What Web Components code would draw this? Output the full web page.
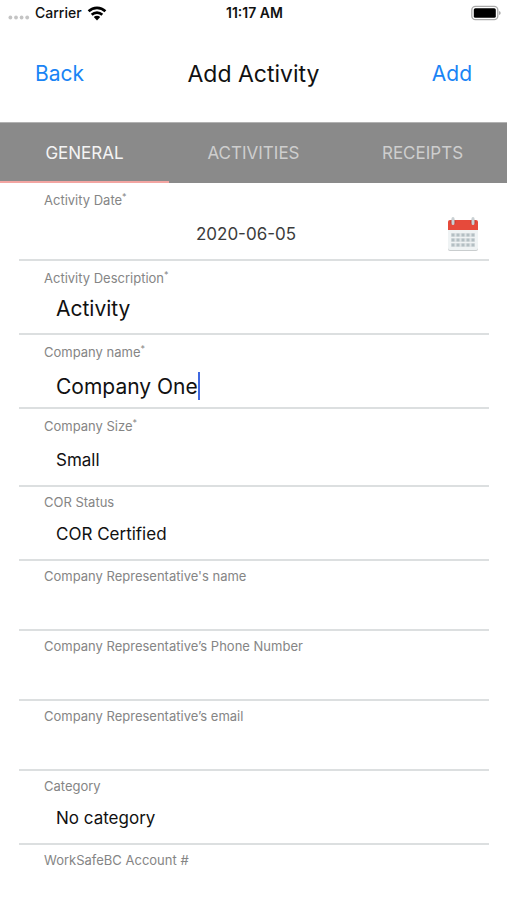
<!DOCTYPE html>
<html lang="en">
<head>
<meta charset="utf-8">
<meta name="viewport" content="width=device-width, initial-scale=1">
<title>Add Activity</title>
<style>
  html { background: #fff; }
  body { margin: 0; min-height: 100vh; overflow: hidden; font-family: Inter, "Liberation Sans", sans-serif; color: #111; }
</style>
</head>
<body>
<activity-screen></activity-screen>

<script>
const define = (name, html, setup) => {
  const template = document.createElement('template');
  template.innerHTML = html;
  customElements.define(name, class extends HTMLElement {
    constructor() {
      super();
      this.attachShadow({ mode: 'open' }).append(template.content.cloneNode(true));
    }
    connectedCallback() { if (setup) setup(this, this.shadowRoot); }
  });
};

define('status-bar', `
  <style>
    :host { display: grid; grid-template-columns: 1fr auto 1fr; align-items: center; height: 26px; padding: 0 6px 0 8px; font-size: 14px; line-height: 18px; font-weight: 500; color: #111; }
    .left { display: flex; align-items: center; gap: 5px; }
    .signal { padding-top: 8px; }
    time { font-weight: 600; }
    .battery { justify-self: end; }
    svg { display: block; }
  </style>
  <div class="left">
    <svg class="signal" width="22" height="5" viewBox="0 0 22 5" fill="#c4c4c4" aria-hidden="true"><circle cx="2.4" cy="2.5" r="1.9"/><circle cx="8" cy="2.5" r="1.9"/><circle cx="13.6" cy="2.5" r="1.9"/><circle cx="19.2" cy="2.5" r="1.9"/></svg>
    <span>Carrier</span>
    <svg width="20" height="15" viewBox="0 0 20 15" fill="none" stroke="#000" stroke-width="2.6" aria-label="Wi-Fi"><path d="M1.6 5.3a12 12 0 0 1 16.8 0"/><path d="M4.7 8.8a7.6 7.6 0 0 1 10.6 0"/><path d="M10 14.4 6.8 11.1a4.6 4.6 0 0 1 6.4 0z" fill="#000" stroke="none"/></svg>
  </div>
  <time>11:17 AM</time>
  <svg class="battery" width="30" height="16" viewBox="0 0 30 16" aria-label="Battery full"><rect x=".8" y="1.3" width="26" height="13.4" rx="3.6" fill="#fff" stroke="#aaa" stroke-width="1.3"/><rect x="2.8" y="3.2" width="22" height="9.6" rx="1.6"/><path d="M28.2 6v4q1.4-.5 1.4-2t-1.4-2" fill="#999"/></svg>
`);

define('nav-header', `
  <style>
    :host { display: grid; grid-template-columns: 1fr auto 1fr; align-items: center; height: 96px; padding: 0 35px; }
    h1 { margin: 0; font-size: 23px; line-height: 28px; font-weight: 400; color: #111; }
    button { margin: 0; padding: 0; border: 0; background: none; font: inherit; font-size: 21px; line-height: 28px; color: #1a84f5; cursor: pointer; }
    .back { justify-self: start; }
    .add { justify-self: end; }
  </style>
  <button class="back" type="button">Back</button>
  <h1><slot></slot></h1>
  <button class="add" type="button">Add</button>
`);

define('tab-item', `
  <style>
    :host { display: flex; flex: 1; }
    button { flex: 1; height: 61px; margin: 0; padding: 2px 0 0; border: 0; border-top: 1px solid #b2b2b2; border-bottom: 2px solid transparent; background: none; font: inherit; font-size: 17px; color: #cecece; cursor: pointer; }
    :host([selected]) button { color: #f4f4f4; border-bottom-color: #f3a5a2; }
  </style>
  <button type="button" role="tab"><slot></slot></button>
`, (host, root) => root.querySelector('button').setAttribute('aria-selected', host.hasAttribute('selected')));

define('tab-bar', `
  <style>
    :host { display: flex; background: #8a8a8a; }
  </style>
  <slot></slot>
`);

define('calendar-icon', `
  <style>
    :host { display: block; }
    svg { display: block; }
  </style>
  <svg width="32" height="36" viewBox="0 0 32 36" aria-hidden="true">
    <rect x="1" y="5" width="30" height="30" rx="2" fill="#c9cdce"/>
    <path d="M1 13h30v19a2 2 0 0 1-2 2H3a2 2 0 0 1-2-2z" fill="#eff3f4"/>
    <path d="M3 4h26a2 2 0 0 1 2 2v8H1V6a2 2 0 0 1 2-2z" fill="#e64a3b"/>
    <circle cx="6" cy="6" r="2.600" fill="#bd3a31"/><circle cx="26" cy="6" r="2.600" fill="#bd3a31"/>
    <path d="M6 2.500v5M26 2.500v5" stroke="#c9d0d3" stroke-width="3" stroke-linecap="round"/>
    <path d="M4 19h24M4 24h24M4 29h24" stroke="#e0e5e7" stroke-width="4"/>
    <path d="M4.500 19h23M4.500 24h23M4.500 29h23" stroke="#b3bfc3" stroke-width="3" stroke-dasharray="3 2"/>
  </svg>
`);

define('form-field', `
  <style>
    :host { display: block; margin: 0 18px 0 19px; padding: 6px 0 var(--field-bottom, 0); border-bottom: 2px solid #dcdfe0; --value-size: 17px; }
    :host([required]) { padding-top: 8px; }
    :host([large]) { --value-size: 21px; }
    :host([spread]), :host([tight]) { --field-bottom: 4px; }
    .row { display: flex; align-items: center; height: 42px; margin-top: 2px; padding: 0 8px 0 37px; }
    :host([required]) .row { margin-top: 0; }
    :host([spread]) .row, :host([low]) .row { margin-top: 4px; }
    :host([type=date]) .row { padding: 0 10px 0 26px; }
    label { display: block; padding-left: 25px; font-size: 13px; line-height: 18px; color: #858585; }
    sup { font-size: 9px; line-height: 0; }
    input, select { flex: 1; min-width: 0; height: 42px; margin: 0; padding: 0; border: 0; outline: 0; border-radius: 0; background: none; appearance: none; font: inherit; font-size: var(--value-size); color: #111; }
    :host([type=date]) input { text-align: center; color: #3c3c3c; }
    :host([caret]) input { flex: none; field-sizing: content; }
    .caret { width: 2px; height: 28px; background: #3f68e0; }
    .picker { margin: 0; padding: 0; border: 0; background: none; cursor: pointer; }
  </style>
  <label for="control"></label>
  <div class="row"></div>
`, (host, root) => {
  const label = root.querySelector('label');
  const row = root.querySelector('.row');
  if (row.children.length) return;
  label.textContent = host.getAttribute('label');
  if (host.hasAttribute('required')) {
    const mark = document.createElement('sup');
    mark.textContent = '*';
    label.append(mark);
  }
  const value = host.getAttribute('value') || '';
  const type = host.getAttribute('type');
  const control = document.createElement(type === 'select' ? 'select' : 'input');
  control.id = 'control';
  if (type === 'select') control.add(new Option(value, value, true, true));
  else { control.type = 'text'; control.value = value; }
  row.append(control);
  if (host.hasAttribute('caret')) {
    const caret = document.createElement('span');
    caret.className = 'caret';
    row.append(caret);
  }
  if (type === 'date') {
    const picker = document.createElement('button');
    picker.className = 'picker';
    picker.type = 'button';
    picker.setAttribute('aria-label', 'Choose date');
    picker.append(document.createElement('calendar-icon'));
    row.append(picker);
  }
});

define('activity-screen', `
  <style>
    :host { display: block; }
  </style>
  <status-bar></status-bar>
  <nav-header>Add Activity</nav-header>
  <tab-bar role="tablist">
    <tab-item selected>GENERAL</tab-item>
    <tab-item>ACTIVITIES</tab-item>
    <tab-item>RECEIPTS</tab-item>
  </tab-bar>
  <main>
    <form-field label="Activity Date" required type="date" value="2020-06-05" spread></form-field>
    <form-field label="Activity Description" required value="Activity" large tight></form-field>
    <form-field label="Company name" required value="Company One" large low caret></form-field>
    <form-field label="Company Size" required type="select" value="Small" spread></form-field>
    <form-field label="COR Status" type="select" value="COR Certified" tight></form-field>
    <form-field label="Company Representative's name"></form-field>
    <form-field label="Company Representative’s Phone Number"></form-field>
    <form-field label="Company Representative’s email"></form-field>
    <form-field label="Category" type="select" value="No category" tight></form-field>
    <form-field label="WorkSafeBC Account #"></form-field>
  </main>
`);
</script>
</body>
</html>
